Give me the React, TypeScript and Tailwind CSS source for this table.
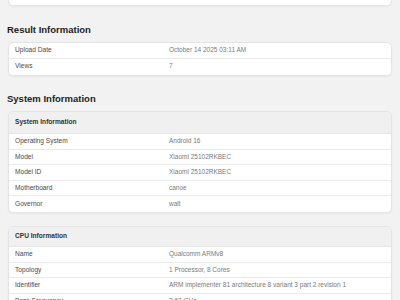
import React from "react";

type Row = [string, string];

const font = { fontFamily: '"Liberation Sans", Arial, sans-serif' };

function Rows({ rows, h }: { rows: Row[]; h: string }) {
  return (
    <>
      {rows.map(([k, v], i) => (
        <div
          key={k}
          className={`flex items-center px-[6px] ${h} ${i < rows.length - 1 ? "border-b border-[#ebebeb]" : ""}`}
        >
          <div className="w-[154px] shrink-0 text-[6.6px] text-[#4a4a4a] leading-none">{k}</div>
          <div className="text-[6.5px] text-[#7a7a7a] leading-none whitespace-nowrap">{v}</div>
        </div>
      ))}
    </>
  );
}

function Card({ title, rows, headerH, rowH, className = "" }: { title?: string; rows: Row[]; headerH?: string; rowH: string; className?: string }) {
  return (
    <div className={`bg-white border border-[#e4e4e4] rounded-[5px] shadow-[0_1px_2px_rgba(0,0,0,0.05)] overflow-hidden ${className}`}>
      {title && (
        <div className={`flex items-center px-[6px] bg-[#f0f0f0] border-b border-[#e6e6e6] ${headerH}`}>
          <span className="text-[6.6px] font-bold text-[#333] leading-none">{title}</span>
        </div>
      )}
      <Rows rows={rows} h={rowH} />
    </div>
  );
}

export default function App() {
  return (
    <div className="w-[400px] h-[300px] overflow-hidden bg-[#f2f2f2] px-2" style={font}>
      <div className="h-[6px] bg-white border border-t-0 border-[#e4e4e4] rounded-b-[5px] shadow-[0_1px_2px_rgba(0,0,0,0.05)]" />
      <div className="mt-[17.5px] h-[12px] leading-[12px] text-[9.5px] font-bold text-[#222] pl-[-1px] -ml-px">
        Result Information
      </div>
      <Card
        className="mt-[6.5px]"
        rowH="h-[15.75px]"
        rows={[
          ["Upload Date", "October 14 2025 03:11 AM"],
          ["Views", "7"],
        ]}
      />
      <div className="mt-[17.3px] h-[12px] leading-[12px] text-[9.5px] font-bold text-[#222] -ml-px">
        System Information
      </div>
      <Card
        className="mt-[6.2px]"
        title="System Information"
        headerH="h-[22px]"
        rowH="h-[15.6px]"
        rows={[
          ["Operating System", "Android 16"],
          ["Model", "Xiaomi 25102RKBEC"],
          ["Model ID", "Xiaomi 25102RKBEC"],
          ["Motherboard", "canoe"],
          ["Governor", "walt"],
        ]}
      />
      <Card
        className="mt-[13px]"
        title="CPU Information"
        headerH="h-[20px]"
        rowH="h-[15.7px]"
        rows={[
          ["Name", "Qualcomm ARMv8"],
          ["Topology", "1 Processor, 8 Cores"],
          ["Identifier", "ARM implementer 81 architecture 8 variant 3 part 2 revision 1"],
          ["Base Frequency", "3.63 GHz"],
          ["Cluster 1", "2 Cores"],
        ]}
      />
    </div>
  );
}
